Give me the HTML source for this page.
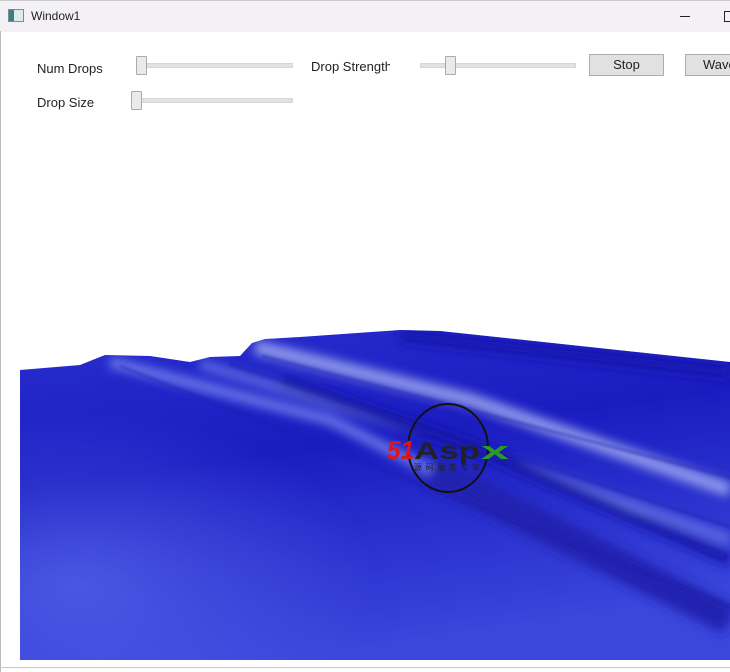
<!DOCTYPE html>
<html><head><meta charset="utf-8"><style>
body{margin:0;width:730px;height:672px;overflow:hidden;background:#fff;font-family:"Liberation Sans",sans-serif;position:relative}
.title{position:absolute;left:0;top:0;width:730px;height:31px;background:#f3f1f6;border-top:1px solid #ccc}
.t{position:absolute;font-size:13px;color:#222}
.track{position:absolute;height:3px;background:#e2e2e2;border:1px solid #d6d6d6}
.thumb{position:absolute;width:9px;height:17px;background:#eaeaea;border:1px solid #aaa;border-radius:1px}
.btn{position:absolute;height:20px;background:#e1e1e1;border:1px solid #adadad;font-size:13px;text-align:center;line-height:20px;color:#222}
</style></head><body>
<div class="title">
 <div style="position:absolute;left:8px;top:8px;width:14px;height:11px;border:1px solid #7a8a99;background:#dfe9ee"><div style="width:5px;height:11px;background:#3c7f7a"></div></div>
 <div class="t" style="left:31px;top:8px;font-size:12px">Window1</div>
 <div style="position:absolute;left:680px;top:15px;width:10px;height:1px;background:#222"></div>
 <div style="position:absolute;left:724px;top:10px;width:9px;height:9px;border:1px solid #222"></div>
</div>
<div style="position:absolute;left:0;top:31px;width:1px;height:641px;background:#bbb"></div>
<div style="position:absolute;left:0;top:667px;width:730px;height:1px;background:#c8c8c8"></div>
<div class="t" style="left:37px;top:61px">Num Drops</div>
<div class="track" style="left:136px;top:63px;width:155px"></div>
<div class="thumb" style="left:136px;top:56px"></div>
<div class="t" style="left:311px;top:59px;width:79px;overflow:hidden;white-space:nowrap">Drop Strength</div>
<div class="track" style="left:420px;top:63px;width:154px"></div>
<div class="thumb" style="left:445px;top:56px"></div>
<div class="btn" style="left:589px;top:54px;width:73px">Stop</div>
<div class="btn" style="left:685px;top:54px;width:60px;text-align:left;padding-left:17px">Waves</div>
<div class="t" style="left:37px;top:95px">Drop Size</div>
<div class="track" style="left:132px;top:98px;width:159px"></div>
<div class="thumb" style="left:131px;top:91px"></div>
<svg style="position:absolute;left:0;top:0" width="730" height="672">
<defs>
<linearGradient id="g" x1="0" y1="0" x2="0.3" y2="1">
<stop offset="0" stop-color="#2a30d0"/><stop offset="0.45" stop-color="#1a1cc0"/><stop offset="1" stop-color="#3a46dc"/></linearGradient>
<radialGradient id="r" cx="0.15" cy="0.7" r="0.6"><stop offset="0" stop-color="#6070f0" stop-opacity="0.6"/><stop offset="1" stop-color="#5a6af0" stop-opacity="0"/></radialGradient>
<filter id="b"><feGaussianBlur stdDeviation="5"/></filter>
<filter id="b2"><feGaussianBlur stdDeviation="1.2"/></filter>
<clipPath id="c"><path d="M20 370 L80 365 L105 355 L150 356 L190 362 L210 357 L240 356 L252 343 L265 339 L300 337 L400 330 L440 331 L730 362 L730 660 L20 660Z"/></clipPath>
</defs>
<g clip-path="url(#c)">
<rect x="0" y="320" width="730" height="350" fill="url(#g)"/>
<rect x="0" y="380" width="500" height="290" fill="url(#r)"/>
<g filter="url(#b)" fill="none">
<path d="M110 362 L330 420 L730 620" stroke="#7f90f4" stroke-width="10" stroke-opacity="0.8"/>
<path d="M200 364 L450 440 L730 540" stroke="#6f7ee8" stroke-width="9" stroke-opacity="0.8"/>
<path d="M255 347 L470 400 L730 490" stroke="#a0aaf0" stroke-width="14" stroke-opacity="0.85"/>
<path d="M400 335 L730 372" stroke="#1212b0" stroke-width="14"/>
<path d="M280 380 L480 450 L730 560" stroke="#1414a8" stroke-width="12"/>
<path d="M430 470 L730 620" stroke="#2020b0" stroke-width="30"/>
</g>
<g filter="url(#b2)" fill="none" stroke="#1a1aa0" stroke-width="1.5" stroke-opacity="0.7">
<path d="M120 366 L740 610"/><path d="M230 364 L740 530"/><path d="M262 356 L740 480"/>
</g>
</g>
<ellipse cx="448" cy="448" rx="40" ry="44" fill="none" stroke="#111" stroke-width="2"/>
<text x="387" y="459" font-family="Liberation Sans" font-weight="bold" font-style="italic" font-size="26" fill="#e3131b" textLength="27" lengthAdjust="spacingAndGlyphs">51</text>
<text x="414" y="459" font-family="Liberation Sans" font-weight="bold" font-size="24" fill="#222" textLength="66" lengthAdjust="spacingAndGlyphs">Asp</text>
<text x="481" y="459" font-family="Liberation Sans" font-weight="bold" font-size="24" fill="#2a9a2a" textLength="28" lengthAdjust="spacingAndGlyphs">x</text>
<text x="414" y="470" font-family="Noto Sans CJK SC,sans-serif" font-size="8" fill="#222" textLength="66" lengthAdjust="spacing">源码服务专家</text>
</svg>
</body></html>
